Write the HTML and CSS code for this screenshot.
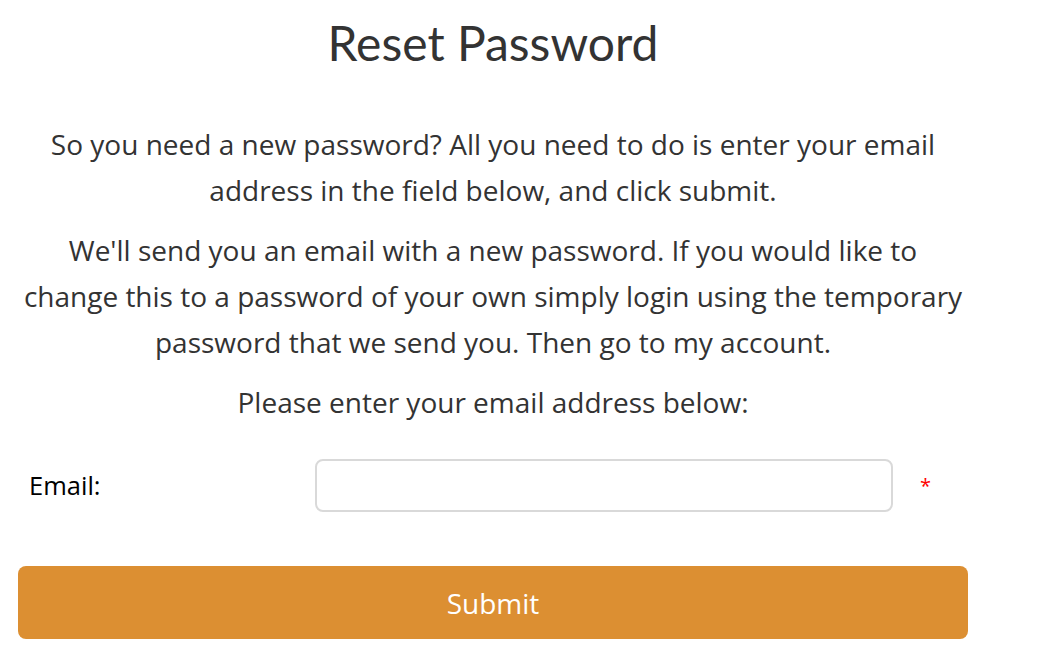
FILE: index.html
```html
<!DOCTYPE html>
<html>
<head>
<meta charset="utf-8">
<link rel="stylesheet" href="styles.css">
<title>Reset Password</title>
</head>
<body>
<div class="page">
  <h1 class="title">Reset Password</h1>
  <p class="text first">So you need a new password? All you need to do is enter your email address in the field below, and click submit.</p>
  <p class="text">We'll send you an email with a new password. If you would like to change this to a password of your own simply login using the temporary password that we send you. Then go to my account.</p>
  <p class="text">Please enter your email address below:</p>
  <form class="form">
    <div class="row">
      <label class="label" for="email">Email:</label>
      <input class="input" id="email" type="text">
      <span class="req">*</span>
    </div>
    <button class="submit" type="button">Submit</button>
  </form>
</div>
</body>
</html>
```
FILE: styles.css
```css
html, body {
  margin: 0;
  padding: 0;
  background: #fff;
}
.page {
  width: 950px;
  margin-left: 18px;
  font-family: "Open Sans", "Liberation Sans", sans-serif;
  color: #333;
}
.title {
  font-family: Lato, "Liberation Sans", sans-serif;
  font-weight: 400;
  font-size: 48px;
  line-height: 56px;
  margin: 15px 0 0;
  text-align: center;
  color: #333;
}
.text {
  font-size: 28px;
  line-height: 46px;
  text-align: center;
  margin: 0 0 14px;
  padding: 0 3px;
}
.text.first {
  margin-top: 50px;
}
.form {
  margin-top: 34px;
}
.row {
  display: flex;
  align-items: center;
  height: 52px;
}
.label {
  width: 286px;
  padding-left: 11px;
  font-size: 25.5px;
  color: #000;
}
.input {
  width: 578px;
  height: 53px;
  box-sizing: border-box;
  border: 2px solid #d9d9d9;
  border-radius: 8px;
  margin: 0;
  font-size: 22px;
}
.req {
  color: #f00;
  font-size: 20px;
  margin-left: 27px;
}
.submit {
  display: block;
  width: 950px;
  height: 73px;
  margin-top: 55px;
  background: #dc8f32;
  border: none;
  border-radius: 8px;
  color: #fff;
  font-family: "Open Sans", "Liberation Sans", sans-serif;
  font-size: 28px;
}
```
